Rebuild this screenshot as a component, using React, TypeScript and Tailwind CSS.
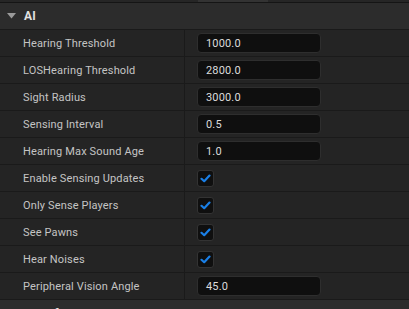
import React from 'react';

type Row =
  | { label: string; kind: 'num'; value: string }
  | { label: string; kind: 'bool'; checked: boolean };

const ROWS: Row[] = [
  { label: 'Hearing Threshold', kind: 'num', value: '1000.0' },
  { label: 'LOSHearing Threshold', kind: 'num', value: '2800.0' },
  { label: 'Sight Radius', kind: 'num', value: '3000.0' },
  { label: 'Sensing Interval', kind: 'num', value: '0.5' },
  { label: 'Hearing Max Sound Age', kind: 'num', value: '1.0' },
  { label: 'Enable Sensing Updates', kind: 'bool', checked: true },
  { label: 'Only Sense Players', kind: 'bool', checked: true },
  { label: 'See Pawns', kind: 'bool', checked: true },
  { label: 'Hear Noises', kind: 'bool', checked: true },
  { label: 'Peripheral Vision Angle', kind: 'num', value: '45.0' },
];

const Check = () => (
  <div className="w-[17px] h-[17px] rounded-[3px] bg-[#0f0f0f] border border-[#333] flex items-center justify-center">
    <svg width="11" height="9" viewBox="0 0 11 9">
      <path d="M1.5 4.8 L4.2 7.2 L9.5 1.6" fill="none" stroke="#1a7fe6" strokeWidth="2.2" strokeLinecap="round" strokeLinejoin="round" />
    </svg>
  </div>
);

export default function App() {
  return (
    <div className="w-[409px] h-[309px] overflow-hidden bg-[#242424] text-[11px] tracking-[0.15px] leading-none" style={{ fontFamily: 'Roboto, "Noto Sans", sans-serif' }}>
      {/* top remnant of previous section */}
      <div className="h-[2px] bg-[#262626] flex">
        <div className="w-[198px]" />
        <div className="w-[70px] bg-[#333]" />
      </div>
      <div className="h-[1px] bg-[#151515]" />

      {/* category header */}
      <div className="h-[26px] bg-[#2c2c2c] flex items-center pl-[7px] gap-[8px]">
        <svg width="9" height="6" viewBox="0 0 9 6">
          <path d="M0 0 H9 L4.5 5.5 Z" fill="#9a9a9a" />
        </svg>
        <span className="font-bold text-[12px] text-[#e2e2e2]">AI</span>
      </div>
      <div className="h-[1px] bg-[#1a1a1a]" />

      {ROWS.map((r) => (
        <div key={r.label}>
          <div className="h-[26px] flex">
            <div className="w-[184px] flex items-center pl-[23px] text-[#c4c4c4]">{r.label}</div>
            <div className="w-[1px] bg-[#1a1a1a]" />
            <div className="flex-1 flex items-center pl-[12px]">
              {r.kind === 'num' ? (
                <div className="w-[124px] h-[20px] rounded-[4px] bg-[#0f0f0f] border border-[#2e2e2e] flex items-center pl-[8px] text-[#dcdcdc]">
                  {r.value}
                </div>
              ) : (
                <Check />
              )}
            </div>
          </div>
          <div className="h-[1px] bg-[#1a1a1a]" />
        </div>
      ))}

      {/* next category header, cut off */}
      <div className="h-[26px] bg-[#2c2c2c] flex items-start pl-[23px] pt-[8px]">
        <span className="font-bold text-[12px] text-[#e2e2e2]">Transform</span>
      </div>
    </div>
  );
}
